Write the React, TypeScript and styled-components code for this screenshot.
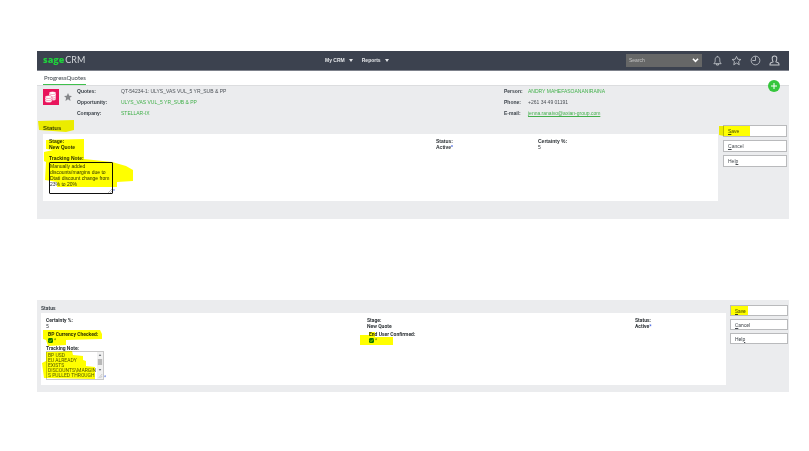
import React from "react";
import styled, { createGlobalStyle } from "styled-components";

const ink = "#3d444b";
const green = "#41b04a";
const yellow = "#ffff00";

const GlobalStyle = createGlobalStyle`
  * { box-sizing: border-box; }
  body {
    margin: 0;
    background: #fff;
    color: ${ink};
    font: 5px/6px "Liberation Sans", Arial, sans-serif;
  }
  button, input, textarea { font: inherit; color: inherit; }
`;

const Page = styled.main`
  display: flex;
  flex-direction: column;
  gap: 81px;
  padding: 51px 20px 59px 37px;
`;

const Shot = styled.section<{ $narrow?: boolean }>`
  position: relative;
  isolation: isolate;
  background: #ebecee;
  font-family: ${(p) => (p.$narrow ? 'Roboto, "Liberation Sans", sans-serif' : "inherit")};
`;

const TopBar = styled.header`
  display: grid;
  grid-template-columns: 282px 1fr auto;
  align-items: center;
  height: 20px;
  padding: 0 5px 2px 6px;
  background: #3c424f;
  border-bottom: 1px solid #7d818b;
  color: #e4e6e9;
`;

const Logo = styled.a`
  display: flex;
  gap: 1px;
  color: #d5d9dd;
  font: 9px/16px Lato, "Liberation Sans", sans-serif;
  text-decoration: none;
  strong { color: #1fd03c; font-family: "Open Sans", sans-serif; font-weight: 800; }
`;

const Menu = styled.nav`
  display: flex;
  gap: 9px;
`;

const MenuButton = styled.button`
  display: flex;
  align-items: center;
  gap: 4px;
  padding: 0;
  border: 0;
  background: none;
  font-weight: 700;
  svg { width: 4px; height: 3px; }
`;

const Tools = styled.div`
  display: flex;
  align-items: center;
`;

const SearchBox = styled.div`
  display: flex;
  align-items: center;
  width: 76px;
  height: 13px;
  margin-right: 6px;
  padding-right: 3px;
  background: #666767;
  svg { width: 7px; height: 6px; }
`;

const SearchInput = styled.input`
  flex: 1;
  min-width: 0;
  padding: 0 3px;
  border: 0;
  background: transparent;
  outline: 0;
  &::placeholder { color: #c4c4c4; opacity: 1; }
`;

const IconButton = styled.button`
  display: grid;
  place-items: center;
  width: 19px;
  height: 18px;
  padding: 0;
  border: 0;
  background: none;
  color: #c6c9ce;
  svg { width: 11px; height: 11px; }
`;

const TabBar = styled.nav`
  display: flex;
  height: 15px;
  padding: 0 6px;
  background: #fff;
  border-bottom: 1px solid #dcdddf;
`;

const Tab = styled.a`
  padding: 3px 0 0 1px;
  border-bottom: 1px solid #3fc04d;
  color: ${ink};
  font-family: Lato, "Liberation Sans", sans-serif;
  font-size: 6px;
  line-height: 8px;
  text-decoration: none;
`;

const AddButton = styled.button`
  position: absolute;
  top: 29px;
  right: 9px;
  display: grid;
  place-items: center;
  width: 12px;
  height: 12px;
  padding: 0;
  border: 0;
  border-radius: 50%;
  background: #35c63c;
  svg { width: 8px; height: 8px; }
`;

const Summary = styled.div`
  display: grid;
  grid-template-columns: 34px 427px 1fr;
  padding: 2px 0 9px 6px;
`;

const Badges = styled.div`
  display: flex;
  align-items: flex-start;
  gap: 5px;
  padding-top: 1px;
  svg:first-child { width: 16px; height: 16px; }
  svg:last-child { width: 8px; height: 8px; margin-top: 4px; }
`;

const Facts = styled.dl<{ $label: number }>`
  display: grid;
  grid-template-columns: ${(p) => p.$label}px 1fr;
  row-gap: 5px;
  align-content: start;
  margin: 0;
  dt { font-weight: 700; }
  dd { margin: 0; color: #4b5056; }
`;

const Link = styled.a<{ $underlined?: boolean }>`
  color: ${green};
  text-decoration: ${(p) => (p.$underlined ? "underline" : "none")};
`;

const Body = styled.div<{ $compact?: boolean }>`
  display: grid;
  grid-template-columns: 1fr ${(p) => (p.$compact ? 58 : 64)}px;
  column-gap: ${(p) => (p.$compact ? 4 : 5)}px;
  padding: ${(p) => (p.$compact ? "5px 1px 7px 4px" : "0 2px 18px 6px")};
`;

const Heading = styled.h2<{ $compact?: boolean }>`
  height: ${(p) => (p.$compact ? 8 : 9)}px;
  margin: 0;
  font-size: ${(p) => (p.$compact ? 5 : 6)}px;
  line-height: 7px;
`;

const Card = styled.div<{ $compact?: boolean }>`
  display: grid;
  grid-template-columns: ${(p) => (p.$compact ? "321px 268px 1fr" : "387px 102px 1fr")};
  align-content: start;
  row-gap: ${(p) => (p.$compact ? 2 : 5)}px;
  min-height: ${(p) => (p.$compact ? 72 : 67)}px;
  padding: ${(p) => (p.$compact ? "4px 5px" : "4px 6px")};
  background: #fff;
`;

const Field = styled.div<{ $strong?: boolean; $inset?: boolean }>`
  display: flex;
  flex-direction: column;
  align-items: flex-start;
  padding-left: ${(p) => (p.$inset ? 2 : 0)}px;
  color: #2c3135;
  font-weight: ${(p) => (p.$strong ? 700 : 400)};
`;

const FieldLabel = styled.label`
  font-weight: 700;
`;

const Required = styled.span`
  color: #3d60e0;
`;

const NoteRow = styled.div`
  display: flex;
  align-items: flex-end;
`;

const Note = styled.textarea`
  display: block;
  width: 64px;
  height: 32px;
  margin-top: 1px;
  padding: 0;
  border: 1px solid #111;
  border-radius: 1px;
  background: #fff;
  line-height: 6px;
  resize: none;
  overflow: hidden;
  outline: 0;
`;

const NoteFrame = styled.div`
  display: flex;
  width: 58px;
  height: 29px;
  border: 1px solid #c8c8c8;
`;

const PlainNote = styled.textarea`
  flex: 1;
  min-width: 0;
  padding: 1px 0 0 1px;
  border: 0;
  background: #fff;
  color: #55595d;
  line-height: 5px;
  resize: none;
  overflow: hidden;
  outline: 0;
  white-space: pre;
`;

const CheckRow = styled.div`
  display: flex;
  align-items: center;
  height: 6px;
  gap: 1px;
`;

const CheckMark = styled.span`
  position: relative;
  display: grid;
  width: 5px;
  height: 5px;
  svg {
    position: absolute;
    inset: 0;
    pointer-events: none;
  }
`;

const CheckInput = styled.input`
  appearance: none;
  width: 5px;
  height: 5px;
  margin: 0;
  border: 1px solid #147a2e;
  border-radius: 1px;
  &:checked { background: #147a2e; }
  &:not(:checked) + svg { display: none; }
`;

const Actions = styled.div`
  display: flex;
  flex-direction: column;
  gap: 3px;
`;

const ActionButton = styled.button<{ $compact?: boolean }>`
  height: ${(p) => (p.$compact ? 11 : 12)}px;
  padding: 0 4px;
  border: 1px solid #b9babc;
  background: #fff;
  color: #44494e;
  line-height: 8px;
  text-align: left;
`;

const Marker = styled.svg`
  position: absolute;
  inset: 0;
  width: 100%;
  height: 100%;
  mix-blend-mode: multiply;
  pointer-events: none;
`;

const SaveMarker = styled(Marker)`
  left: auto;
  right: 0;
  width: 70px;
`;

const Caret = () => (
  <svg viewBox="0 0 4 3" aria-hidden="true"><path d="M0 0h4L2 3z" fill="currentColor" /></svg>
);

const line = { fill: "none", stroke: "currentColor", strokeWidth: 1.8, strokeLinejoin: "round" as const };

const BellIcon = () => (
  <svg viewBox="0 0 24 24" aria-hidden="true">
    <path {...line} d="M4 19c3-3 3-5 3-9 0-4 2-6 5-6s5 2 5 6c0 4 0 6 3 9zM10 19v3h4v-3M12 2v2" />
  </svg>
);
const StarIcon = () => (
  <svg viewBox="0 0 24 24" aria-hidden="true">
    <path {...line} d="M12 3l2.800 6.200 6.700.6-5 4.600 1.500 6.800-6-3.600-6 3.600 1.500-6.800-5-4.600 6.700-.6z" />
  </svg>
);
const ClockIcon = () => (
  <svg viewBox="0 0 24 24" aria-hidden="true">
    <circle {...line} cx="12" cy="12" r="9.500" /><path {...line} d="M12 3v9H5" />
  </svg>
);
const UserIcon = () => (
  <svg viewBox="0 0 24 24" aria-hidden="true">
    <path {...line} strokeWidth={2.2} d="M9 15C8 13 7 10 7 7c0-3 2-5 5-5s5 2 5 5c0 3-1 6-2 8l5 2c2 1 2 2 2 5H2c0-3 0-4 2-5z" />
  </svg>
);
const QuoteIcon = () => (
  <svg viewBox="0 0 16 16" aria-hidden="true">
    <path fill="#e8145c" d="M0 0h16v16H0z" />
    <g fill="#fff" stroke="#e8145c" strokeWidth=".4">
      <path d="M6 4v6c0 2 7 2 7 0V4z" /><ellipse cx="9.500" cy="4" rx="3.500" ry="1.500" />
      <path d="M2 8v4c0 2 7 2 7 0V8z" /><ellipse cx="5.500" cy="8" rx="3.500" ry="1.500" />
      <path fill="none" d="M2 10c0 2 7 2 7 0M9 8c2 0 4-.5 4-1.500M9 10c2 0 4-.5 4-1.500" />
    </g>
  </svg>
);

const Star = () => <Required>*</Required>;

function CheckField({ id, label }: { id: string; label: string }) {
  return (
    <Field $inset>
      <FieldLabel htmlFor={id}>{label}</FieldLabel>
      <CheckRow>
        <CheckMark>
          <CheckInput id={id} type="checkbox" defaultChecked />
          <svg viewBox="0 0 5 5" aria-hidden="true"><path d="M1 2.500l1 1 2-2" fill="none" stroke="#e6fbe9" strokeWidth=".7" /></svg>
        </CheckMark>
        <Star />
      </CheckRow>
    </Field>
  );
}

function ActionList({ compact }: { compact?: boolean }) {
  return (
    <Actions>
      <ActionButton $compact={compact}><u>S</u>ave</ActionButton>
      <ActionButton $compact={compact}><u>C</u>ancel</ActionButton>
      <ActionButton $compact={compact}>Hel<u>p</u></ActionButton>
    </Actions>
  );
}

function QuoteScreen() {
  return (
    <Shot>
      <TopBar>
        <Logo href="#home"><strong>sage</strong><span>CRM</span></Logo>
        <Menu aria-label="Main">
          <MenuButton>My CRM <Caret /></MenuButton>
          <MenuButton>Reports <Caret /></MenuButton>
        </Menu>
        <Tools>
          <SearchBox>
            <SearchInput aria-label="Search" placeholder="Search" />
            <svg viewBox="0 0 8 7" aria-hidden="true"><path d="M1 2l3 3 3-3" fill="none" stroke="#fff" strokeWidth="1.800" /></svg>
          </SearchBox>
          <IconButton aria-label="Notifications"><BellIcon /></IconButton>
          <IconButton aria-label="Favorites"><StarIcon /></IconButton>
          <IconButton aria-label="Recent"><ClockIcon /></IconButton>
          <IconButton aria-label="Profile"><UserIcon /></IconButton>
        </Tools>
      </TopBar>
      <TabBar><Tab href="#progress">ProgressQuotes</Tab></TabBar>
      <Summary>
        <Badges>
          <QuoteIcon />
          <svg viewBox="0 0 24 24" aria-hidden="true"><path fill="#85878a" d="M12 0l3.700 8 8.300.9-6.300 5.700L19.500 24 12 19l-7.500 5 1.800-9.400L0 8.900 8.300 8z" /></svg>
        </Badges>
        <Facts $label={44}>
          <dt>Quotes:</dt><dd>QT-54234-1: ULYS_VAS VUL_5 YR_SUB &amp; PP</dd>
          <dt>Opportunity:</dt><dd><Link href="#opportunity">ULYS_VAS VUL_5 YR_SUB &amp; PP</Link></dd>
          <dt>Company:</dt><dd><Link href="#company">STELLAR-IX</Link></dd>
        </Facts>
        <Facts $label={24}>
          <dt>Person:</dt><dd><Link href="#person">ANDRY MAHEFASOANANIRAINA</Link></dd>
          <dt>Phone:</dt><dd>+261 34 49 01191</dd>
          <dt>E-mail:</dt><dd><Link $underlined href="#email">jenna.ranaivo@axian-group.com</Link></dd>
        </Facts>
      </Summary>
      <Body>
        <div>
          <Heading>Status</Heading>
          <Card>
            <Field $strong><span>Stage:</span><span>New Quote</span></Field>
            <Field $strong><span>Status:</span><span>Active<Star /></span></Field>
            <Field><FieldLabel as="span">Certainty %:</FieldLabel><span>5</span></Field>
            <Field>
              <FieldLabel htmlFor="note-a">Tracking Note:</FieldLabel>
              <NoteRow>
                <Note id="note-a" spellCheck={false} defaultValue={"Manually added\ndiscounts/margins due to\nDtati discount change from\n23% to 20%"} />
                <Star />
              </NoteRow>
            </Field>
          </Card>
        </div>
        <ActionList />
      </Body>
      <AddButton aria-label="Add">
        <svg viewBox="0 0 8 8" aria-hidden="true"><path d="M4 1v6M1 4h6" stroke="#fff" /></svg>
      </AddButton>
      <Marker aria-hidden="true">
        <g fill={yellow}>
          <path d="M1 70l36-1v10l-8 2-27-2z" />
          <path d="M9 89l38-1v20l28 3 14 4 7 4v11l-16 1v5H20v-5l-12-2 1-18-2-1v-9l9-2-7-1z" />
        </g>
        <path d="M71 142l4-4M73 142l2-2" stroke="#999" strokeWidth=".6" />
      </Marker>
      <SaveMarker aria-hidden="true"><path fill={yellow} d="M0 75h31v10H5l-5-1z" /></SaveMarker>
    </Shot>
  );
}

function FollowUpScreen() {
  return (
    <Shot $narrow>
      <Body $compact>
        <div>
          <Heading $compact>Status</Heading>
          <Card $compact>
            <Field><FieldLabel as="span">Certainty %:</FieldLabel><span>5</span></Field>
            <Field $strong><span>Stage:</span><span>New Quote</span></Field>
            <Field $strong><span>Status:</span><span>Active<Star /></span></Field>
            <CheckField id="currency" label="BP Currency Checked:" />
            <CheckField id="confirmed" label="End User Confirmed:" />
            <span />
            <Field>
              <FieldLabel htmlFor="note-b">Tracking Note:</FieldLabel>
              <NoteRow>
                <NoteFrame>
                  <PlainNote id="note-b" spellCheck={false} defaultValue={"BP USD\nEU ALREADY\nEXISTS\nDISCOUNTS\\MARGIN\nS PULLED THROUGH"} />
                  <svg width="6" height="27" viewBox="0 0 7 27" preserveAspectRatio="none" aria-hidden="true">
                    <path fill="#f1f1f1" d="M0 0h7v27H0z" /><path fill="#b8b8b8" d="M1 7h5v6H1z" />
                    <path fill="#70757a" d="M2 4l1.500-2L5 4zM2 17l1.500 2L5 17z" />
                    <path stroke="#999" strokeWidth=".5" d="M2 26l4-4M4 26l2-2" />
                  </svg>
                </NoteFrame>
                <Star />
              </NoteRow>
            </Field>
          </Card>
        </div>
        <ActionList compact />
      </Body>
      <Marker aria-hidden="true">
        <g fill={yellow}>
          <path d="M6 30h57l2 4v5l-36 1v5l-18 1-2-6-3-1z" />
          <path d="M9 52l26-1 1 4 10 1v4l3 1v5l9 1v12l-51-1-2-15 4-2z" />
          <path d="M332 32h6v5h18v8h-33v-10h9z" />
        </g>
      </Marker>
      <SaveMarker aria-hidden="true"><path fill={yellow} d="M12 6h17v9H12z" /></SaveMarker>
    </Shot>
  );
}

export default function App() {
  return (
    <>
      <GlobalStyle />
      <Page>
        <QuoteScreen />
        <FollowUpScreen />
      </Page>
    </>
  );
}
